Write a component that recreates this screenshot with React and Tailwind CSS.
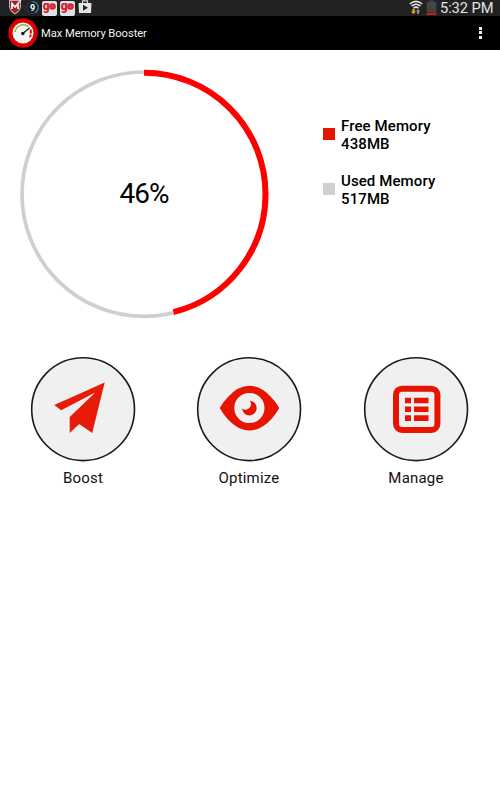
const FREE_PERCENT = 46

function StatusBar() {
  return (
    <div className="h-4 bg-[#222222] flex items-center justify-between pl-2 pr-1.5 overflow-hidden">
      <div className="flex items-center h-4">
        <svg className="w-[14px] h-4" viewBox="0 0 14 16">
          <path d="M1 0H13V7Q12 12 7 14.5Q2 12 1 7Z" fill="#b9b9b9" />
          <path d="M2 1H12V7Q11 11 7 13.3Q3 11 2 7Z" fill="#a51c26" />
          <path d="M4 9V3.5L7 7L10 3.5V9" fill="none" stroke="#fff" strokeWidth="1.6" />
          <path d="M7 7L13 0" stroke="#ddd" strokeWidth="1.3" />
        </svg>
        <div className="relative w-[13px] h-4 ml-1 flex items-center justify-center">
          <svg className="absolute inset-0 w-[13px] h-4" viewBox="0 0 13 16">
            <circle cx="6.5" cy="7.5" r="5.7" fill="#171b1f" stroke="#25485a" strokeWidth="1" />
            <path d="M6.5 1.8A5.7 5.7 0 0 1 9 12.6" fill="none" stroke="#2a83ab" strokeWidth="1.2" />
          </svg>
          <span className="relative text-[9px] leading-none font-bold text-white">9</span>
        </div>
        <div className="ml-[3px] flex gap-[3px]">
          <GoIcon />
          <GoIcon />
        </div>
        <svg className="w-[14px] h-4 ml-[3px]" viewBox="0 0 14 16">
          <path d="M4.5 3V.8H9.5V3" fill="none" stroke="#ddd" strokeWidth="1.2" />
          <path d="M.5 3H13.5L13 13H1Z" fill="#e4e4e4" />
          <path d="M5 4.8L10 7.8L5 10.8Z" fill="#222" />
        </svg>
      </div>
      <div className="flex items-center h-4">
        <svg className="w-[14px] h-4" viewBox="0 0 14 16">
          <path d="M.8 4Q7-1.2 13.2 4M2.6 6.1Q7 2.3 11.4 6.1M4.5 8.2Q7 6 9.5 8.2" fill="none" stroke="#e5e5e5" strokeWidth="1.5" />
          <path d="M3.4 9H5.6V11.5H7L4.5 14L2 11.5H3.4Z" fill="#f3a51d" />
          <path d="M8 14H10V11.5H11.5L9 9L6.8 11.5H8Z" fill="#8e8e8e" />
        </svg>
        <svg className="w-[11px] h-4 ml-[3px]" viewBox="0 0 11 16">
          <path d="M3 .5H8V2H10.3V13H.7V2H3Z" fill="#444444" />
          <path d="M.7 12H10.3V13H.7Z" fill="#174043" />
          <path d="M.5 13H10.5V15H.5Z" fill="#c91d1d" />
        </svg>
        <span className="ml-[3px] w-[54px] text-[14.7px] leading-4 text-[#e2e2e2] whitespace-nowrap tracking-[-0.1px]">5:32 PM</span>
      </div>
    </div>
  )
}

function GoIcon() {
  return (
    <div className="w-[15px] h-[15px] rounded-[2px] bg-[#dce2e7] flex items-center justify-center">
      <span className="text-[12px] leading-[10px] -mt-[5px] font-black text-[#d6202b] tracking-[-0.5px]">g</span>
      <svg className="w-[7px] h-[7px] -mt-[3px]" viewBox="0 0 7 7">
        <circle cx="3.5" cy="3.5" r="3.3" fill="#d6202b" />
        <path d="M1.5 4L4 2.2M3 5L5.5 3.2" stroke="#e08a90" strokeWidth=".6" />
      </svg>
    </div>
  )
}

function AppBar() {
  return (
    <div className="h-[34px] bg-black flex items-center pl-2 pr-[18px]">
      <svg className="w-[30px] h-[30px]" viewBox="0 0 30 30">
        <circle cx="15" cy="15" r="14.7" fill="#dc0000" />
        <circle cx="15" cy="15" r="10.5" fill="#f5f5f5" />
        <path d="M7.2 14A8 8 0 0 1 20.5 8.8" fill="none" stroke="#91b52e" strokeWidth="1.4" />
        <path d="M22.8 11.5V15.5M22.8 16.5Q23 18 21.5 19" fill="none" stroke="#d50000" strokeWidth="1.8" />
        <path d="M14.5 15.7L21.5 10" stroke="#111" strokeWidth="1.1" />
        <circle cx="14.8" cy="15.5" r="1.7" fill="#111" />
      </svg>
      <h1 className="ml-[3px] mt-px text-[11.2px] leading-4 text-[#f2f2f2] tracking-[-0.06px] whitespace-nowrap">Max Memory Booster</h1>
      <div className="ml-auto -mt-px flex flex-col gap-[1.5px]">
        <span className="w-[3.5px] h-[3px] bg-[#eeeeee]" />
        <span className="w-[3.5px] h-[3px] bg-[#eeeeee]" />
        <span className="w-[3.5px] h-[3px] bg-[#eeeeee]" />
      </div>
    </div>
  )
}

function MemoryRing() {
  return (
    <div className="relative w-[250px] h-[250px] flex items-center justify-center">
      <svg className="absolute inset-0 w-[250px] h-[250px]" viewBox="0 0 250 250">
        <circle cx="125.2" cy="125.2" r="122.2" fill="none" stroke="#cfcfcf" strokeWidth="3.7" />
        <circle
          cx="125"
          cy="125.2"
          r="121.5"
          fill="none"
          stroke="#ff0000"
          strokeWidth="6"
          pathLength="100"
          strokeDasharray={`${FREE_PERCENT + 0.1} 100`}
          transform="rotate(-90 125 125.2)"
        />
      </svg>
      <span className="relative text-[28px] leading-8 tracking-[-1px] text-black">{FREE_PERCENT}%</span>
    </div>
  )
}

function LegendItem({ color, label, value }) {
  return (
    <div className="flex items-center gap-1.5">
      <span className={`w-3 h-3 mb-[3px] ${color}`} />
      <div className="text-[15px] leading-[18px] font-medium text-black whitespace-nowrap tracking-[0.1px]">
        <p>{label}</p>
        <p>{value}</p>
      </div>
    </div>
  )
}

function Action({ label, children }) {
  return (
    <div className="flex flex-col items-center">
      <svg className="w-[106px] h-[106px]" viewBox="0 0 106 106">
        <circle cx="53.1" cy="53.2" r="51.4" fill="#f0f0f0" stroke="#1b1b1b" strokeWidth="1.6" />
        {children}
      </svg>
      <span className="mt-1.5 text-[15px] leading-5 tracking-[0.2px] text-[#111111]">{label}</span>
    </div>
  )
}

function App() {
  return (
    <div className="w-full h-[800px] bg-white overflow-hidden font-['Roboto',sans-serif]">
      <StatusBar />
      <AppBar />
      <div className="flex pt-[19px] pl-[19px]">
        <MemoryRing />
        <div className="ml-[54px] pt-12 flex flex-col gap-[19px]">
          <LegendItem color="bg-[#e61400]" label="Free Memory" value="438MB" />
          <LegendItem color="bg-[#cfcfcf]" label="Used Memory" value="517MB" />
        </div>
      </div>
      <div className="mt-[37px] grid grid-cols-[166px_166px_168px]">
        <Action label="Boost">
          <path d="M74.7 26.5L24.2 49L31.2 54.2L65.2 36.5L39.7 61V77L49.2 68L62.2 77Z" fill="#e71c08" />
        </Action>
        <Action label="Optimize">
          <path d="M23.7 52Q27 46 32 41Q42 29.8 53.5 29.8Q65 29.8 75 41Q80 46 83.3 52Q80 58 75 63.5Q65 74.4 53.5 74.4Q42 74.4 32 63.5Q27 58 23.7 52Z" fill="#e61400" />
          <circle cx="53.4" cy="52" r="15.1" fill="#f0f0f0" />
          <path d="M53.8 44.8A7.3 7.3 0 1 1 46.1 52.5A5.5 5.5 0 0 0 53.8 44.8Z" fill="#e61400" />
        </Action>
        <Action label="Manage">
          <rect x="33" y="32.7" width="41.4" height="41.2" rx="6" fill="none" stroke="#e61400" strokeWidth="6" />
          <path
            d="M42 41.7H48V47.3H42ZM51 41.7H65.5V47.3H51ZM42 50.5H48V56.1H42ZM51 50.5H65.5V56.1H51ZM42 59.3H48V64.9H42ZM51 59.3H65.5V64.9H51Z"
            fill="#e61400"
          />
        </Action>
      </div>
    </div>
  )
}

export default App
